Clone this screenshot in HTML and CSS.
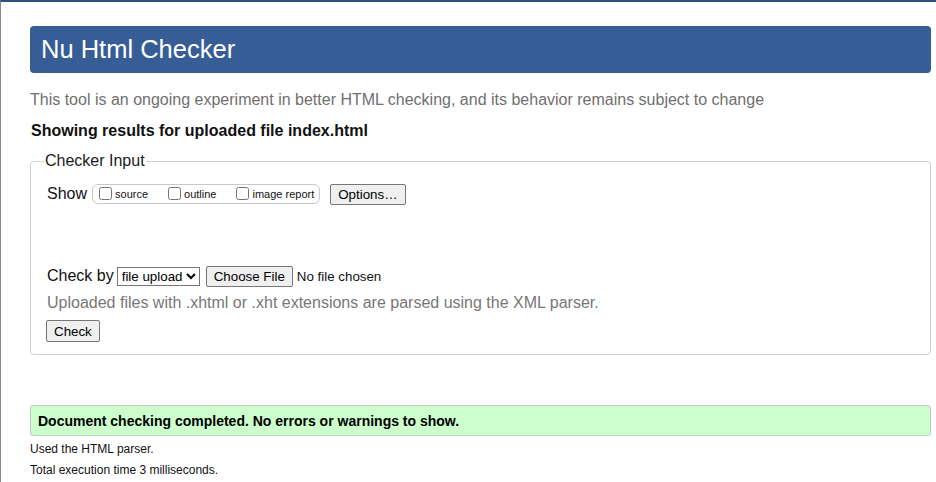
FILE: index.html
```html
<!DOCTYPE html>
<html lang="en">
<head>
<meta charset="utf-8">
<title>Nu Html Checker</title>
<link rel="stylesheet" href="styles.css">
</head>
<body>
<div class="page">
  <h1 class="banner">Nu Html Checker</h1>
  <p class="intro">This tool is an ongoing experiment in better HTML checking, and its behavior remains subject to change</p>
  <p class="showing">Showing results for uploaded file index.html</p>
  <fieldset class="input">
    <legend>Checker Input</legend>
    <div class="row show-row">
      <span class="label">Show</span>
      <span class="opts">
        <label class="opt"><input type="checkbox" class="cb">source</label>
        <label class="opt"><input type="checkbox" class="cb">outline</label>
        <label class="opt"><input type="checkbox" class="cb">image report</label>
      </span>
      <button class="btn options-btn">Options…</button>
    </div>
    <div class="row check-row">
      <span class="label">Check by</span>
      <select class="sel"><option>file upload</option></select>
      <button class="btn file-btn">Choose File</button>
      <span class="nofile">No file chosen</span>
    </div>
    <p class="note">Uploaded files with .xhtml or .xht extensions are parsed using the XML parser.</p>
    <button class="btn check-btn">Check</button>
  </fieldset>
  <div class="success">Document checking completed. No errors or warnings to show.</div>
  <p class="meta">Used the HTML parser.</p>
  <p class="meta">Total execution time 3 milliseconds.</p>
</div>
</body>
</html>
```

FILE: styles.css
```css
html {
  border-top: 2px solid #2f4f7f;
  border-left: 1px solid #8a8a8a;
  min-height: 100%;
  box-sizing: border-box;
}
body {
  margin: 0;
  font-family: "Liberation Sans", Arial, sans-serif;
  color: #111;
  background: #fff;
}
.page {
  padding: 24px 5px 0 29px;
}
.banner {
  margin: 0;
  height: 47px;
  box-sizing: border-box;
  padding: 9px 11px 0;
  background: #365d95;
  color: #fff;
  border-radius: 4px;
  font-size: 25.5px;
  font-weight: normal;
  line-height: 29px;
}
.intro {
  margin: 17px 0 0;
  font-size: 16px;
  line-height: 20px;
  color: #6f6f6f;
}
.showing {
  margin: 11px 0 0 1px;
  font-size: 16px;
  line-height: 20px;
  font-weight: bold;
}
.input {
  margin: 11px 0 0;
  padding: 13px 16px 12px;
  border: 1px solid #cfcfcf;
  border-radius: 4px;
  min-width: 0;
}
.input legend {
  padding: 0 1px;
  margin-left: -3px;
  font-size: 16px;
  line-height: 18px;
  color: #1a1a1a;
}
.row {
  display: flex;
  align-items: center;
}
.label {
  font-size: 16px;
}
.show-row {
  height: 22px;
}
.opts {
  display: inline-flex;
  align-items: center;
  margin-left: 5px;
  height: 18px;
  padding: 0 5px 0 6px;
  border: 1px solid #c8c8c8;
  border-radius: 6px;
}
.opt {
  display: inline-flex;
  align-items: center;
  font-size: 11px;
  margin-right: 20px;
}
.opt:last-child {
  margin-right: 0;
}
.cb {
  width: 13px;
  height: 13px;
  margin: 0 3px 1px 0;
}
.btn {
  font-family: "Liberation Sans", Arial, sans-serif;
  font-size: 13.33px;
  color: #000;
  background: #efefef;
  border: 1px solid #767676;
  border-radius: 2px;
  padding: 1px 7px;
  height: 21px;
  line-height: 17px;
}
.options-btn {
  margin-left: 10px;
  padding: 1px 7px;
}
.check-row {
  margin-top: 60px;
  height: 22px;
}
.sel {
  margin-left: 3px;
  font-family: "Liberation Sans", Arial, sans-serif;
  font-size: 13.33px;
  height: 19px;
  padding: 0;
  border: 1px solid #767676;
  border-radius: 0;
  background: #fff;
  color: #000;
}
.file-btn {
  margin-left: 6px;
  padding: 1px 7px;
}
.nofile {
  margin-left: 4px;
  font-size: 13.33px;
}
.note {
  margin: 5px 0 6px;
  font-size: 16px;
  line-height: 22px;
  color: #777;
}
.check-btn {
  display: block;
  margin-left: -1px;
  height: 22px;
}
.success {
  margin-top: 50px;
  height: 31px;
  box-sizing: border-box;
  padding: 6px 7px 0;
  background: #ccffcc;
  border: 1px solid #c6c6c6;
  border-radius: 3px;
  font-weight: bold;
  font-size: 14px;
  line-height: 18px;
  color: #000;
}
.meta {
  margin: 6px 0 0;
  font-size: 12px;
  line-height: 15px;
  color: #111;
}
.meta + .meta {
  margin-top: 6px;
}
```
